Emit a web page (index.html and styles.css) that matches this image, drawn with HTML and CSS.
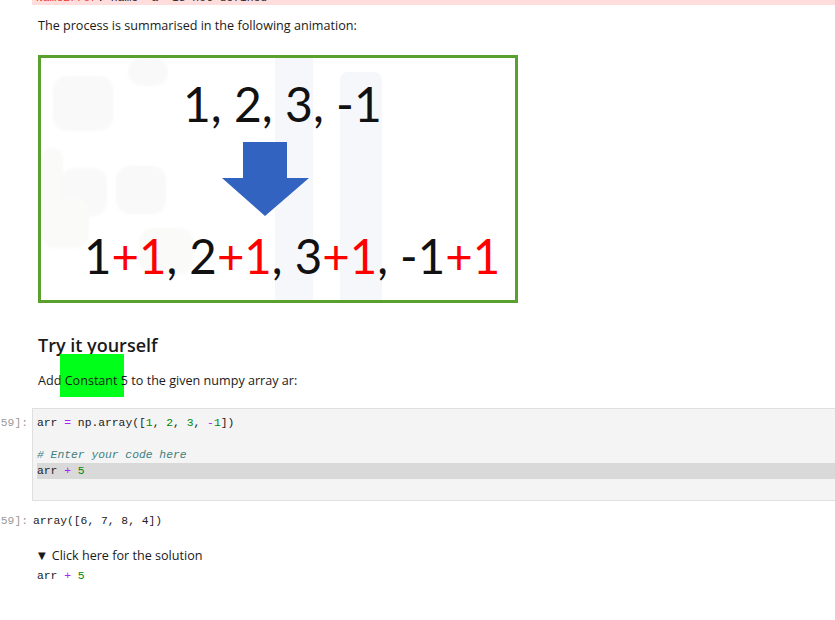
FILE: index.html
```html
<!DOCTYPE html>
<html>
<head>
<meta charset="utf-8">
<link rel="stylesheet" href="styles.css">
</head>
<body>
<div class="error-out"><pre class="err-text"><span class="err-name">NameError</span>: name 'a' is not defined</pre></div>

<div class="md">
  <p class="lead">The process is summarised in the following animation:</p>
  <div class="figure">
    <div class="bg band1"></div>
    <div class="bg band2"></div>
    <div class="bg blob b1"></div>
    <div class="bg blob b2"></div>
    <div class="bg blob b3"></div>
    <div class="bg blob b4"></div>
    <div class="bg blob b5"></div>
    <div class="bg blob b6"></div>
    <div class="bg blob b7"></div>
    <div class="fig-line top">1, 2, 3, -1</div>
    <svg class="arrow" width="87" height="74" viewBox="0 0 87 74"><path d="M21 0 H65 V36 H87 L43 74 L0 36 H21 Z" fill="#3263c0"/></svg>
    <div class="fig-line bottom">1<span class="r">+1</span>, 2<span class="r">+1</span>, 3<span class="r">+1</span>, -1<span class="r">+1</span></div>
  </div>
  <h2 class="title">Try it yourself</h2>
  <div class="task-wrap">
    <div class="hl-box"></div>
    <p class="task">Add Constant 5 to the given numpy array ar:</p>
  </div>
</div>

<div class="cell">
  <div class="prompt">[59]:</div>
  <div class="input-area">
    <div class="cl"><span class="v">arr</span> <span class="op">=</span> np.array([<span class="n">1</span>, <span class="n">2</span>, <span class="n">3</span>, <span class="op">-</span><span class="n">1</span>])</div>
    <div class="cl">&nbsp;</div>
    <div class="cl"><span class="c"># Enter your code here</span></div>
    <div class="cl sel">arr <span class="op">+</span> <span class="n">5</span></div>
  </div>
</div>

<div class="cell out">
  <div class="prompt">[59]:</div>
  <div class="output">array([6, 7, 8, 4])</div>
</div>

<div class="md sol">
  <div class="summary"><span class="tri">▼</span>Click here for the solution</div>
  <div class="sol-code">arr <span class="op">+</span> <span class="n">5</span></div>
</div>
</body>
</html>
```
FILE: styles.css
```css
html, body {
  margin: 0;
  padding: 0;
  background: #fff;
  overflow: hidden;
}
body {
  width: 835px;
  height: 620px;
  font-family: "Open Sans", "Noto Sans", sans-serif;
  font-size: 12.6px;
  color: #1a1a1a;
}
.error-out {
  margin-left: 32px;
  height: 5px;
  background: #fdd;
  overflow: hidden;
}
.err-text {
  margin: -10px 0 0 4px;
  font-family: "Liberation Mono", monospace;
  font-size: 11.33px;
  line-height: 16px;
  color: #222;
}
.err-name { color: #e33; }

.md {
  padding-left: 38px;
  position: relative;
}
.lead {
  margin: 0;
  padding-top: 12px;
  line-height: 18px;
}
.figure {
  position: relative;
  margin-top: 20px;
  width: 480px;
  height: 248px;
  box-sizing: border-box;
  border: 3px solid #5aa02f;
  background: #fff;
  overflow: hidden;
  font-family: Lato, "Open Sans", sans-serif;
  color: #111;
}
.bg { position: absolute; }
.band1 { left: 234px; top: 0; width: 38px; height: 250px; background: #f5f7fa; }
.band2 { left: 299px; top: 14px; width: 42px; height: 240px; background: #f6f7fa; border-radius: 8px; }
.blob { border-radius: 14px; background: #f9f9fa; filter: blur(1px); }
.b1 { left: 12px; top: 18px; width: 60px; height: 55px; }
.b2 { left: 87px; top: 0; width: 40px; height: 28px; }
.b3 { left: 0; top: 90px; width: 22px; height: 70px; background: #fafaf9; }
.b4 { left: 20px; top: 110px; width: 46px; height: 48px; }
.b5 { left: 75px; top: 108px; width: 50px; height: 48px; }
.b6 { left: 0; top: 140px; width: 48px; height: 50px; background: #fafaf8; }
.b7 { left: 98px; top: 170px; width: 54px; height: 46px; background: #fafaf9; }
.fig-line {
  position: relative;
  font-size: 48px;
  line-height: 48px;
  white-space: nowrap;
}
.fig-line.top { margin: 22px 0 0 142px; }
.arrow { position: relative; display: block; margin: 14px 0 0 181px; }
.fig-line.bottom { margin: 16px 0 0 43px; font-size: 47.4px; }
.r { color: #f00; }

.title {
  margin: 30px 0 0 0;
  font-size: 18px;
  font-weight: 600;
  line-height: 24px;
  color: #1a1a1a;
}
.task-wrap { position: relative; margin-top: 1px; }
.hl-box {
  position: absolute;
  left: 22px;
  top: -4px;
  width: 64px;
  height: 43px;
  background: #00ff19;
  z-index: 0;
}
.task {
  position: relative;
  z-index: 1;
  margin: 0;
  line-height: 18px;
  padding-top: 14px;
}

.cell {
  display: flex;
  margin-top: 18px;
}
.prompt {
  width: 28px;
  flex: none;
  display: flex;
  justify-content: flex-end;
  font-family: "Liberation Mono", monospace;
  font-size: 11.33px;
  line-height: 16px;
  color: #9a9a9a;
  white-space: pre;
  align-self: flex-start;
}
.cell:not(.out) .prompt { padding-top: 7px; }
.input-area {
  margin-left: 4px;
  width: 810px;
  flex: none;
  box-sizing: border-box;
  background: #f4f4f4;
  border: 1px solid #dfdfdf;
  padding: 6px 0 21px 4px;
  font-family: "Liberation Mono", monospace;
  font-size: 11.33px;
  line-height: 16px;
  color: #222;
}
.cl { white-space: pre; height: 16px; }
.sel { background: #d9d9d9; }
.op { color: #a2f; }
.n { color: #080; }
.c { color: #408080; font-style: italic; }
.v { color: #222; }

.cell.out { margin-top: 12px; }
.output {
  margin-left: 5px;
  font-family: "Liberation Mono", monospace;
  font-size: 11.33px;
  line-height: 16px;
  color: #222;
  white-space: pre;
}

.sol { padding-top: 18px; }
.summary {
  line-height: 18px;
  color: #1a1a1a;
}
.tri { font-size: 10px; margin-right: 6px; font-family: "DejaVu Sans", sans-serif; position: relative; top: -1px; }
.sol-code {
  margin-top: 2px;
  margin-left: -1px;
  font-family: "Liberation Mono", monospace;
  font-size: 11.33px;
  line-height: 16px;
  color: #222;
  white-space: pre;
}
```
